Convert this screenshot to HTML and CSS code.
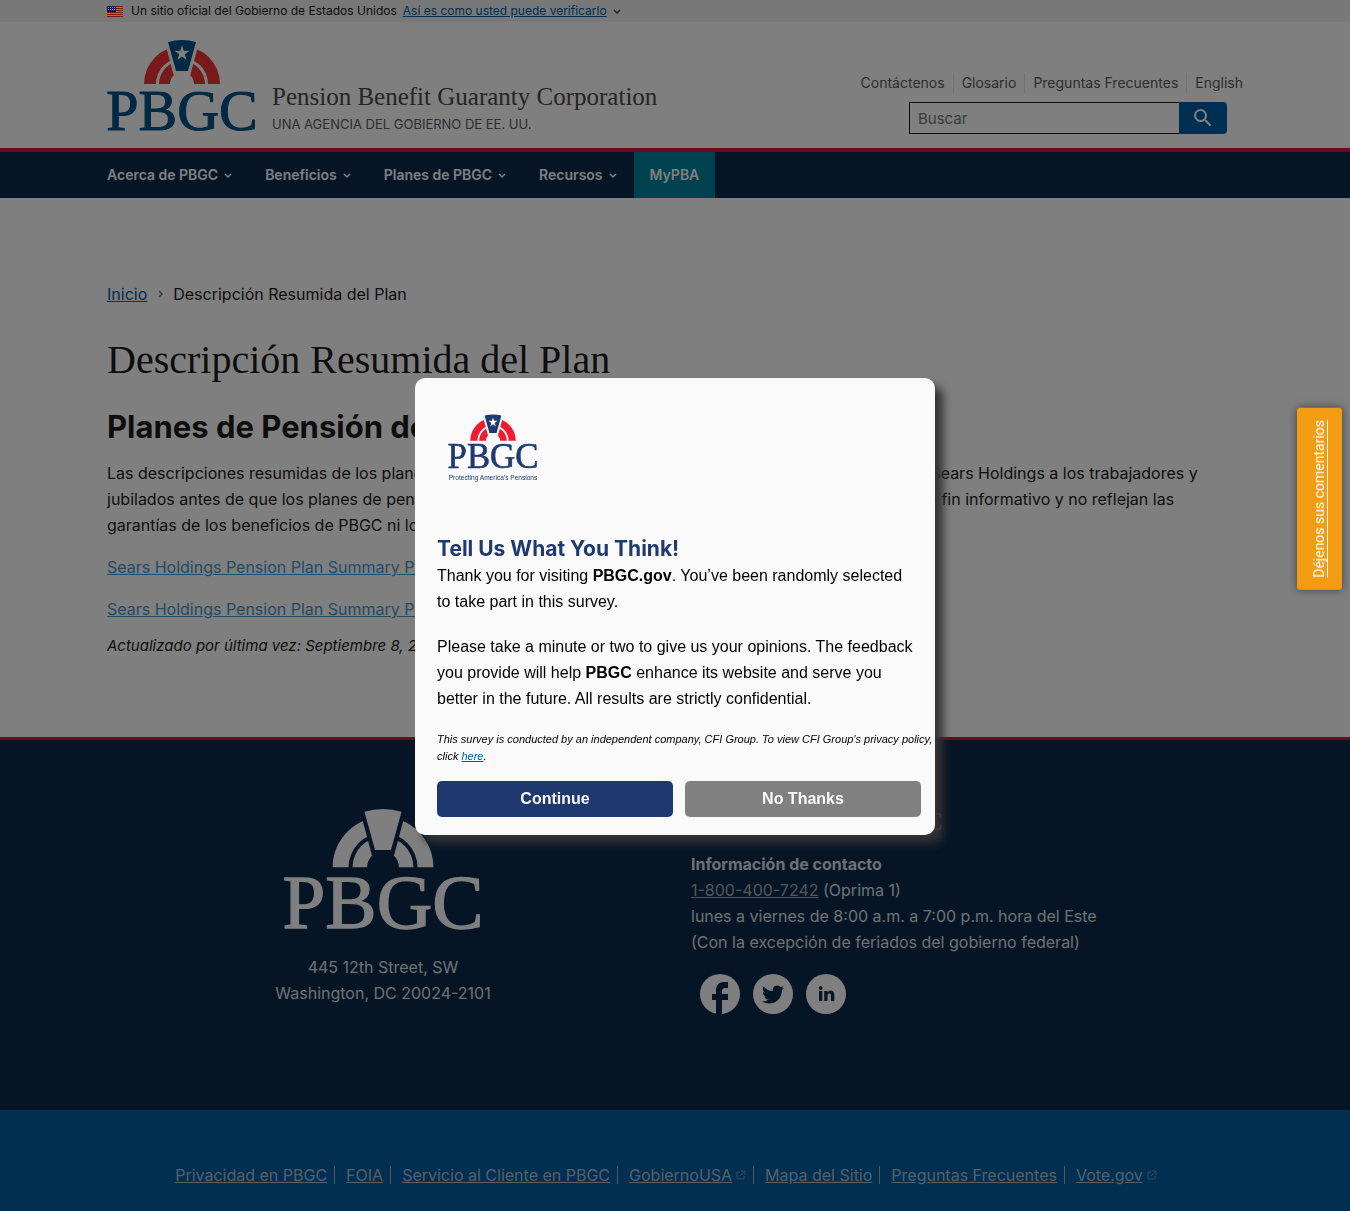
FILE: index.html
```html
<!DOCTYPE html>
<html lang="es">
<head>
<meta charset="utf-8">
<meta name="viewport" content="width=device-width, initial-scale=1">
<title>Descripción Resumida del Plan | PBGC</title>
<link rel="stylesheet" href="styles.css">
</head>
<body>
<svg class="sprite" aria-hidden="true">
  <defs>
    <mask id="arch-cut">
      <rect width="150" height="92" fill="#fff"/>
      <path d="M61 2Q75-2 89 2L81 32H69Z" fill="#000" stroke="#000" stroke-width="6"/>
    </mask>
    <symbol id="logo" viewBox="0 0 150 92">
      <g class="logo-arch" mask="url(#arch-cut)">
        <path d="M37 44A38 38 0 0 1 113 44H101A26 26 0 0 0 49 44Z"/>
        <path d="M52 44A23 23 0 0 1 98 44H87A12 12 0 0 0 63 44Z"/>
      </g>
      <path class="logo-key" d="M61 2Q75-2 89 2L81 31H69Z"/>
      <path class="logo-star" d="M75 5L76.700 10.700H82.600L77.800 14.200L79.600 20L75 16.500L70.400 20L72.200 14.200L67.400 10.700H73.300Z"/>
      <text class="logo-name" x="75" y="90" text-anchor="middle">PBGC</text>
    </symbol>
    <symbol id="chevron" viewBox="0 0 10 10"><path d="M2 4l3 3 3-3" fill="none" stroke="currentColor" stroke-width="1.500"/></symbol>
    <symbol id="external" viewBox="0 0 10 10"><path d="M4 2H1v7h7V6M5 1h4v4M9 1L4 6" fill="none" stroke="currentColor"/></symbol>
  </defs>
</svg>

<div class="banner">
  <div class="container banner-row">
    <svg class="flag" viewBox="0 0 16 11" aria-hidden="true">
      <path fill="#fff" d="M0 0h16v11H0z"/>
      <path stroke="#db3e1f" d="M0 .5h16M0 2.500h16M0 4.500h16M0 6.500h16M0 8.500h16M0 10.500h16"/>
      <path fill="#1e33b1" d="M0 0h9v6H0z"/>
      <path stroke="#fff" stroke-dasharray="1 1" d="M1 1.500h7M1 3.500h7"/>
    </svg>
    <span>Un sitio oficial del Gobierno de Estados Unidos</span>
    <a href="#verificar">Así es como usted puede verificarlo</a>
    <svg class="chevron" aria-hidden="true"><use href="#chevron"/></svg>
  </div>
</div>

<header class="header">
  <div class="container header-row">
    <a class="brand" href="#inicio">
      <svg class="logo" role="img" aria-label="PBGC"><use href="#logo"/></svg>
      <span class="brand-text">
        <span class="brand-name">Pension Benefit Guaranty Corporation</span>
        <span class="brand-tag">UNA AGENCIA DEL GOBIERNO DE EE. UU.</span>
      </span>
    </a>
    <div class="header-tools">
      <ul class="quick-links">
        <li><a href="#contacto">Contáctenos</a></li>
        <li><a href="#glosario">Glosario</a></li>
        <li><a href="#preguntas">Preguntas Frecuentes</a></li>
        <li><a href="#english">English</a></li>
      </ul>
      <form class="search" role="search">
        <input type="search" placeholder="Buscar" aria-label="Buscar">
        <button type="submit" aria-label="Buscar">
          <svg viewBox="0 0 24 24" aria-hidden="true"><path fill="currentColor" d="M15.500 14h-.79l-.28-.27A6.470 6.470 0 0 0 16 9.500 6.500 6.500 0 1 0 9.500 16c1.610 0 3.090-.59 4.230-1.570l.27.280v.79l5 4.990L20.490 19l-4.990-5zm-6 0C7.010 14 5 11.990 5 9.500S7.010 5 9.500 5 14 7.010 14 9.500 11.990 14 9.500 14z"/></svg>
        </button>
      </form>
    </div>
  </div>
</header>

<nav class="nav" aria-label="Principal">
  <div class="container nav-row">
    <button type="button">Acerca de PBGC <svg class="chevron" aria-hidden="true"><use href="#chevron"/></svg></button>
    <button type="button">Beneficios <svg class="chevron" aria-hidden="true"><use href="#chevron"/></svg></button>
    <button type="button">Planes de PBGC <svg class="chevron" aria-hidden="true"><use href="#chevron"/></svg></button>
    <button type="button">Recursos <svg class="chevron" aria-hidden="true"><use href="#chevron"/></svg></button>
    <a class="nav-account" href="#mypba">MyPBA</a>
  </div>
</nav>

<main class="container main">
  <nav class="breadcrumb" aria-label="Ruta">
    <a href="#inicio">Inicio</a>
    <svg class="chevron crumb-arrow" aria-hidden="true"><use href="#chevron"/></svg>
    <span>Descripción Resumida del Plan</span>
  </nav>
  <h1>Descripción Resumida del Plan</h1>
  <h2>Planes de Pensión de Sears Holdings</h2>
  <p>Las descripciones resumidas de los planes de pensión que siguen a continuación fueron provistas antes por Sears Holdings a los trabajadores y<br>
  jubilados antes de que los planes de pensión terminaran. Estas mismas descripciones se ofrecen con el único fin informativo y no reflejan las<br>
  garantías de los beneficios de PBGC ni los límites legales.</p>
  <p><a class="doc-link" href="#spd1">Sears Holdings Pension Plan Summary Plan Description 1</a></p>
  <p><a class="doc-link" href="#spd2">Sears Holdings Pension Plan Summary Plan Description 2</a></p>
  <p class="updated">Actualizado por última vez: Septiembre 8, 2023</p>
</main>

<footer>
  <div class="footer-main">
    <div class="container footer-grid">
      <div class="footer-address">
        <svg class="logo logo-mono" role="img" aria-label="PBGC"><use href="#logo"/></svg>
        <address>445 12th Street, SW<br>Washington, DC 20024-2101</address>
      </div>
      <div class="footer-contact">
        <h3>Comuníquese con PBGC</h3>
        <p><strong>Información de contacto</strong><br>
        <a href="tel:18004007242">1-800-400-7242</a> (Oprima 1)<br>
        lunes a viernes de 8:00 a.m. a 7:00 p.m. hora del Este<br>
        (Con la excepción de feriados del gobierno federal)</p>
        <div class="social">
          <a href="#facebook" aria-label="Facebook"><svg viewBox="0 0 40 40"><circle cx="20" cy="20" r="20" fill="#fff"/><path d="M16 41V26h-4v-6h4v-3c0-6 3-9 8-9h4v6h-3c-2 0-3 1-3 3v3h6v6h-6v15z"/></svg></a>
          <a href="#twitter" aria-label="Twitter"><svg viewBox="0 0 40 40"><circle cx="20" cy="20" r="20" fill="#fff"/><path transform="translate(9 9.500) scale(.92)" d="M23.953 4.570a10 10 0 01-2.825.775 4.958 4.958 0 002.163-2.723c-.951.555-2.005.959-3.127 1.184a4.920 4.920 0 00-8.384 4.482C7.690 8.095 4.067 6.130 1.640 3.162a4.822 4.822 0 00-.666 2.475c0 1.710.87 3.213 2.188 4.096a4.904 4.904 0 01-2.228-.616v.06a4.923 4.923 0 003.946 4.827 4.996 4.996 0 01-2.212.085 4.936 4.936 0 004.604 3.417 9.867 9.867 0 01-6.102 2.105c-.39 0-.779-.023-1.170-.067a13.995 13.995 0 007.557 2.209c9.053 0 13.998-7.496 13.998-13.985 0-.21 0-.42-.015-.63A9.935 9.935 0 0024 4.590z"/></svg></a>
          <a href="#linkedin" aria-label="LinkedIn"><svg viewBox="0 0 40 40"><circle cx="20" cy="20" r="20" fill="#fff"/><circle cx="14.600" cy="14" r="1.900"/><path d="M13 17h3.300v10H13zM18.300 17h3.100v1.400c.6-1 1.700-1.700 3.200-1.700 3 0 3.700 2 3.700 4.700V27H25v-5c0-1.300-.1-2.600-1.700-2.600s-1.800 1.200-1.800 2.500V27h-3.200z"/></svg></a>
        </div>
      </div>
    </div>
  </div>
  <div class="footer-legal">
    <ul class="container">
      <li><a href="#privacidad">Privacidad en PBGC</a></li>
      <li><a href="#foia">FOIA</a></li>
      <li><a href="#servicio">Servicio al Cliente en PBGC</a></li>
      <li><a href="#gobiernousa">GobiernoUSA</a><svg aria-hidden="true"><use href="#external"/></svg></li>
      <li><a href="#mapa">Mapa del Sitio</a></li>
      <li><a href="#frecuentes">Preguntas Frecuentes</a></li>
      <li><a href="#vote">Vote.gov</a><svg aria-hidden="true"><use href="#external"/></svg></li>
    </ul>
  </div>
</footer>

<div class="overlay">
  <dialog class="survey" lang="en" open aria-labelledby="survey-title">
    <div class="survey-logo">
      <svg class="logo" role="img" aria-label="PBGC"><use href="#logo"/></svg>
      <svg class="survey-motto" viewBox="0 0 82 8"><text x="41" y="6" text-anchor="middle">Protecting America's Pensions</text></svg>
    </div>
    <h2 id="survey-title">Tell Us What You Think!</h2>
    <p>Thank you for visiting <strong>PBGC.gov</strong>. You’ve been randomly selected to take part in this survey.</p>
    <p>Please take a minute or two to give us your opinions. The feedback you provide will help <strong>PBGC</strong> enhance its website and serve you better in the future. All results are strictly confidential.</p>
    <p class="survey-note">This survey is conducted by an independent company, CFI Group. To view CFI Group's privacy policy, click <a href="#privacy">here</a>.</p>
    <div class="survey-actions">
      <button type="button" class="continue">Continue</button>
      <button type="button" class="decline">No Thanks</button>
    </div>
  </dialog>
</div>
<a class="feedback" href="#comentarios">Déjenos sus comentarios</a>
</body>
</html>
```
FILE: styles.css
```css
* { box-sizing: border-box; }
body {
  margin: 0;
  background: #fff;
  color: #1b1b1b;
  font: 16px/26px Inter, "Public Sans", "Liberation Sans", sans-serif;
}
ul { list-style: none; margin: 0; padding: 0; }
h1, h2, h3, p { margin: 0; }
button { border: 0; padding: 0; font: inherit; cursor: pointer; }
.sprite { position: absolute; width: 0; height: 0; }
.container { width: 100%; max-width: 1200px; margin: 0 auto; padding: 0 32px; }
.chevron { width: 10px; height: 10px; }

/* Logo */
.logo {
  --arch: #f03434;
  --ink: #005288;
  --star: #fff;
  display: block;
  flex: none;
  width: 150px;
  height: 92px;
}
.logo-arch { fill: var(--arch); }
.logo-key { fill: var(--ink); }
.logo-star { fill: var(--star); }
.logo-name { fill: var(--ink); stroke: var(--ink); stroke-width: 1px; font: 58px "Liberation Serif", serif; }
.logo-mono { --arch: #fff; --ink: #fff; width: 200px; height: 122px; }

/* Government banner */
.banner { background: #f0f0f0; font-size: 12px; line-height: 22px; }
.banner-row { display: flex; align-items: center; gap: 8px; }
.banner a { margin-left: -2px; color: #005ea2; }
.banner .chevron { margin-left: -3px; color: #3d4551; }
.flag { width: 16px; height: 11px; }

/* Header */
.header-row { display: flex; align-items: flex-start; justify-content: space-between; padding-top: 18px; padding-bottom: 14px; }
.brand { display: flex; align-items: flex-end; gap: 15px; color: #565c65; text-decoration: none; }
.brand-text { display: flex; flex-direction: column; }
.brand-name { font: 25px/38px "Liberation Serif", serif; color: #4a4a4a; }
.brand-tag { font-size: 13px; line-height: 16px; }
.header-tools { display: flex; flex-direction: column; align-items: flex-end; padding-top: 33px; }
.quick-links { display: flex; font-size: 14px; line-height: 20px; }
.quick-links li + li { margin-left: 8px; padding-left: 8px; border-left: 1px solid #e6e6e6; }
.quick-links a { color: #565c65; text-decoration: none; }
.search { display: flex; width: 318px; height: 32px; margin: 9px 16px 0 0; }
.search input {
  flex: 1;
  min-width: 0;
  padding: 0 8px;
  border: 1px solid #1b1b1b;
  border-right: 0;
  border-radius: 0;
  background: #fff;
  font: 15px Inter, sans-serif;
}
.search input::placeholder { color: #757575; }
.search button { width: 48px; border-radius: 0 4px 4px 0; background: #005ea2; color: #fff; }
.search svg { display: block; width: 24px; height: 24px; margin: auto; }

/* Main navigation */
.nav { border-top: 4px solid #d8123b; background: #0b2a4c; font-size: 14px; font-weight: 600; }
.nav-row { display: flex; }
.nav-row > * { display: flex; align-items: center; gap: 5px; padding: 10px 16px; color: #fff; background: none; text-decoration: none; }
.nav-row > :first-child { padding-left: 0; }
.nav-row > .nav-account { background: #0082a0; }

/* Page content */
.main { padding-top: 83px; padding-bottom: 78px; }
.breadcrumb { display: flex; align-items: center; gap: 8px; }
.breadcrumb a { color: #005ea2; }
.crumb-arrow { transform: rotate(-90deg); color: #71767a; }
.main h1 { margin-top: 28px; font: 40px/50px "Liberation Serif", serif; }
.main h2 { margin-top: 22px; font-size: 31px; line-height: 40px; }
.main p { margin-top: 16px; white-space: nowrap; }
.main h2 + p { margin-top: 13px; }
.doc-link { color: #4896c8; }
.main .updated { margin-top: 11px; font-size: 15px; font-style: italic; }

/* Footer */
.footer-main { border-top: 3px solid #d8123b; background: #0b2a4c; color: #dfe1e2; }
.footer-grid { display: grid; grid-template-columns: 1fr 1fr; gap: 32px; padding-top: 69px; padding-bottom: 96px; }
.footer-address { display: flex; flex-direction: column; align-items: center; gap: 23px; text-align: center; }
.footer-address address { font-style: normal; }
.footer-contact h3 { margin-bottom: 16px; font: 25px/26px "Liberation Serif", serif; }
.footer-contact a { color: #a9aeb1; }
.social { display: flex; gap: 13px; margin: 19px 9px 0; }
.social a, .social svg { display: block; width: 40px; height: 40px; }
.social path, .social circle + circle { fill: #0b2a4c; }
.footer-legal { background: #005ea2; padding: 56px 0 28px; }
.footer-legal ul { display: flex; flex-wrap: wrap; justify-content: center; }
.footer-legal li { display: flex; align-items: center; margin-right: 11px; line-height: 18px; padding-right: 7px; border-right: 1px solid #a9aeb1; }
.footer-legal li:last-child { border: 0; }
.footer-legal a { color: #a9c0d6; }
.footer-legal svg { width: 10px; height: 10px; margin-left: 4px; color: #6c93b5; }

/* Survey dialog */
.overlay { position: fixed; inset: 0; display: flex; align-items: center; justify-content: center; padding-top: 2px; background: rgba(0, 0, 0, .5); }
.survey {
  position: static;
  width: 520px;
  margin: 0;
  padding: 34px 14px 18px 22px;
  border: 0;
  border-radius: 10px;
  background: #fafafa;
  color: #000;
  box-shadow: 8px 8px 10px #333;
  font-family: "Liberation Sans", Arial, sans-serif;
}
.survey-logo { width: 90px; margin-left: 11px; margin-bottom: 54px; }
.survey .logo { --arch: #ee1c2e; --ink: #1f3a70; width: 90px; height: 60px; }
.survey-motto { display: block; width: 90px; height: 9px; margin-top: 1px; fill: #1f3a70; font: 6px "Liberation Sans", sans-serif; }
.survey h2 { margin-bottom: 1px; color: #1f3a70; font: 700 21px/26px Inter, sans-serif; }
.survey p { margin-right: 4px; }
.survey p + p { margin-top: 19px; }
.survey .survey-note { margin-right: -14px; font-size: 11px; line-height: 17px; font-style: italic; }
.survey-note a { color: #005ea2; }
.survey-actions { display: grid; grid-template-columns: 1fr 1fr; gap: 12px; margin-top: 16px; }
.survey-actions button { height: 36px; border-radius: 5px; color: #fafafa; font-weight: 700; }
.continue { background: #1f386f; }
.decline { background: #808080; }

/* Feedback tab */
.feedback {
  position: fixed;
  top: 408px;
  right: 8px;
  width: 45px;
  padding: 12px 0;
  border-radius: 3px;
  background: #f29c14;
  color: #fff;
  box-shadow: 0 0 8px rgba(0, 0, 0, .5);
  font: 14px/45px Roboto, sans-serif;
  writing-mode: vertical-rl;
  transform: rotate(180deg);
}
```
